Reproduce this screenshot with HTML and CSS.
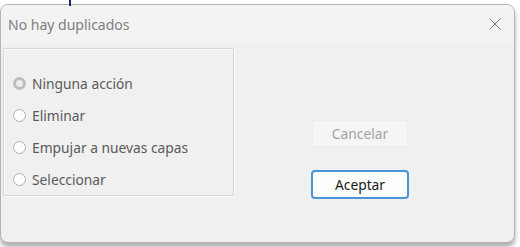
FILE: index.html
```html
<!DOCTYPE html>
<html lang="es">
<head>
<meta charset="utf-8">
<link rel="stylesheet" href="styles.css">
</head>
<body>
<div class="tick"></div>
<div class="window">
  <div class="titlebar">
    <span class="title">No hay duplicados</span>
    <svg class="close" width="12" height="12" viewBox="0 0 12 12"><path d="M0.5 0.5 L11.5 11.5 M11.5 0.5 L0.5 11.5" stroke="#7a7a7a" stroke-width="1" fill="none"/></svg>
  </div>
  <div class="content">
    <div class="group">
      <label class="row"><span class="radio checked"></span><span class="label">Ninguna acción</span></label>
      <label class="row"><span class="radio"></span><span class="label">Eliminar</span></label>
      <label class="row"><span class="radio"></span><span class="label">Empujar a nuevas capas</span></label>
      <label class="row"><span class="radio"></span><span class="label">Seleccionar</span></label>
    </div>
    <div class="buttons">
      <div class="btn disabled">Cancelar</div>
      <div class="btn default">Aceptar</div>
    </div>
  </div>
</div>
</body>
</html>
```
FILE: styles.css
```css
html, body {
  margin: 0;
  padding: 0;
  background: #ffffff;
}
body {
  width: 520px;
  height: 247px;
  overflow: hidden;
  position: relative;
  padding-top: 4px;
  box-sizing: border-box;
  font-family: "Noto Sans", "Open Sans", sans-serif;
}
.tick {
  position: absolute;
  left: 69px;
  top: 0;
  width: 2px;
  height: 6px;
  background: #1a2a6a;
  z-index: 2;
}
.window {
  width: 515px;
  height: 239px;
  box-sizing: border-box;
  border: 1px solid #b4b4b4;
  border-radius: 8px;
  background: #f0f0f0;
  box-shadow: 0 4px 5px rgba(0,0,0,0.33);
  overflow: hidden;
}
.titlebar {
  height: 38px;
  background: #f3f3f3;
  display: flex;
  align-items: center;
  justify-content: space-between;
  padding: 0 13px 0 7px;
}
.title {
  font-size: 14px;
  color: #7f7f7f;
}
.close {
  display: block;
}
.content {
  display: flex;
  padding: 5px 0 0 2px;
}
.group {
  width: 231px;
  height: 148px;
  box-sizing: border-box;
  border: 1px solid #d6d6d6;
  box-shadow: inset 1px 1px 0 #fbfbfb, 1px 1px 0 #fbfbfb;
  padding: 18px 0 0 9px;
  display: flex;
  flex-direction: column;
}
.row {
  height: 32px;
  display: flex;
  align-items: center;
  gap: 6px;
}
.radio {
  width: 13px;
  height: 13px;
  box-sizing: border-box;
  border-radius: 50%;
  border: 1px solid #b0b0b0;
  background: #fdfdfd;
}
.radio.checked {
  border: 3px solid #bdbdbd;
  background: #ececec;
}
.label {
  font-size: 13.8px;
  color: #5a5a5a;
}
.buttons {
  margin-left: 78px;
  margin-top: 72px;
  display: flex;
  flex-direction: column;
  gap: 23px;
}
.btn {
  width: 96px;
  height: 27px;
  box-sizing: border-box;
  border-radius: 4px;
  display: flex;
  align-items: center;
  justify-content: center;
  font-size: 13.8px;
}
.btn.disabled {
  background: #f5f5f5;
  border: 1px solid #ededed;
  color: #a2a2a2;
}
.btn.default {
  width: 98px;
  height: 29px;
  margin-left: -1px;
  background: #fdfdfd;
  border: 2px solid #4a95d6;
  color: #1b1b1b;
}
```
